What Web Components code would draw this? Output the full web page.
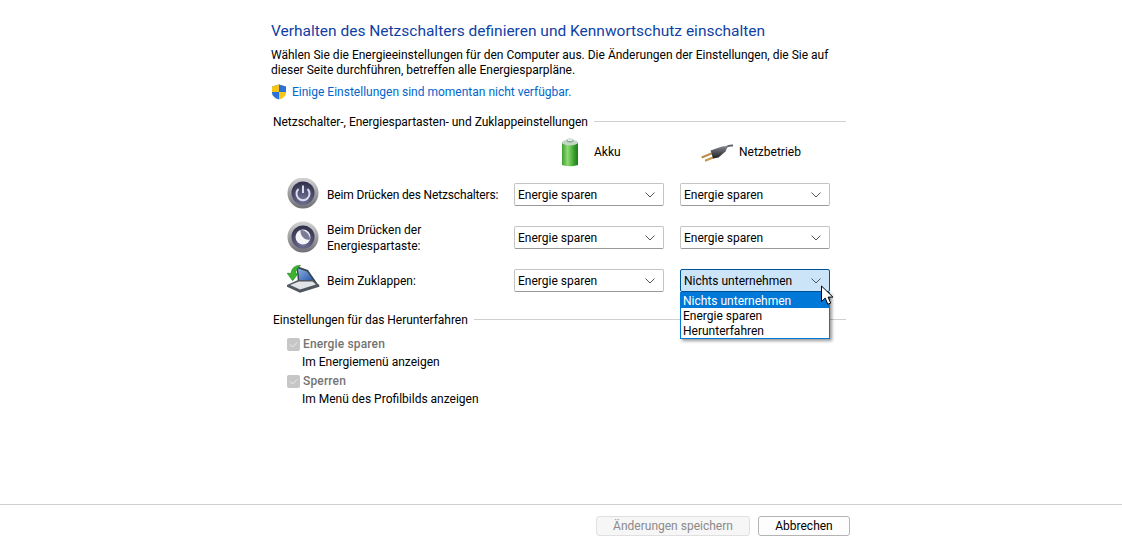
<!DOCTYPE html>
<html lang="de">
<head>
<meta charset="utf-8">
<title>Systemeinstellungen</title>
<style>
    html, body { margin: 0; height: 100%; background: #fff; }
    body { font: 12px Roboto, "Liberation Sans", sans-serif; color: #000; }
</style>
</head>
<body>
<power-page>
    <h-line slot="g1" label="Netzschalter-, Energiespartasten- und Zuklappeinstellungen"></h-line>
    <power-row slot="rows" icon="power"><span style="letter-spacing:-.16px">Beim Drücken des Netzschalters:</span><combo-box slot="a" value="Energie sparen"></combo-box><combo-box slot="b" value="Energie sparen"></combo-box></power-row>
    <power-row slot="rows" icon="sleep">Beim Drücken der<br>Energiespartaste:<combo-box slot="a" value="Energie sparen"></combo-box><combo-box slot="b" value="Energie sparen"></combo-box></power-row>
    <power-row slot="rows" icon="lid">Beim Zuklappen:<combo-box slot="a" value="Energie sparen"></combo-box><combo-box slot="b" value="Nichts unternehmen" open></combo-box></power-row>
    <h-line slot="g2" label="Einstellungen für das Herunterfahren"></h-line>
    <check-item slot="checks" label="Energie sparen" hint="Im Energiemenü anzeigen"></check-item>
    <check-item slot="checks" label="Sperren" hint="Im Menü des Profilbilds anzeigen"></check-item>
    <action-button slot="footer" disabled>Änderungen speichern</action-button>
    <action-button slot="footer">Abbrechen</action-button>
</power-page>

<script>
const FONT = `Roboto, "Liberation Sans", sans-serif`

const DISC = `
    <defs>
        <linearGradient id="r" x1="0" y1="0" x2="0" y2="1"><stop offset="0" stop-color="#d4d4d6"/><stop offset="1" stop-color="#6f6f74"/></linearGradient>
        <radialGradient id="f" cx=".5" cy=".8" r=".8"><stop offset="0" stop-color="#73739c"/><stop offset="1" stop-color="#2e2e48"/></radialGradient>
    </defs>
    <circle cx="16" cy="16" r="15.500" fill="url(#r)"/><circle cx="16" cy="16" r="11.500" fill="url(#f)"/>`

const ICONS = {
    power: `<svg width="32" height="32" viewBox="0 1 32 32">${DISC}
        <path d="M11.500 12a6.500 6.500 0 1 0 9 0" fill="none" stroke="#dcdcea" stroke-width="2"/>
        <path d="M16 8.500v7.500" stroke="#dcdcea" stroke-width="2"/>
    </svg>`,
    sleep: `<svg width="32" height="32" viewBox="0 0 32 32">${DISC}
        <circle cx="16" cy="16" r="7.500" fill="#f4f4f9"/>
        <path d="M13.500 9C18 8.500 23 13 23 18.500 18 20 13 15 13.500 9z" fill="#7b7b96"/>
    </svg>`,
    lid: `<svg width="33" height="30" viewBox="0 0 33 30">
        <defs><linearGradient id="s" x1="0" y1="0" x2="1" y2="1"><stop offset="0" stop-color="#8ab2e4"/><stop offset="1" stop-color="#1f4f9e"/></linearGradient></defs>
        <path d="M9.500 2L21 6l9 13H11z" fill="#39424f"/>
        <path d="M11 4.500L20 7.500l7.500 10.500H12.500z" fill="url(#s)"/>
        <path d="M0 21l11-5h15.300l6 5v1.700L13 28.700 0 22.700z" fill="#50575f"/>
        <path d="M3 21l9-3.500h13.500L29 20.500 13 25.500z" fill="#e2e4e7"/>
        <path d="M13.500 1.500C8.500 1 4.500 4 4.200 9.300H.200l5.500 7.400 5.600-7.400H8.400C8.800 6.500 10.800 3.500 13.500 1.500z" fill="#3bb32e" stroke="#1d7d1a" stroke-width=".6"/>
    </svg>`,
    battery: `<svg width="24" height="32" viewBox="0 0 24 32">
        <defs><linearGradient id="b" x1="0" y1="0" x2="1" y2="0"><stop offset="0" stop-color="#3f9e32"/><stop offset=".35" stop-color="#8fdb72"/><stop offset=".75" stop-color="#3aa02c"/><stop offset="1" stop-color="#1c7a1d"/></linearGradient></defs>
        <path d="M3 6.500h16v22.500q-8 2.500-16 0z" fill="url(#b)"/>
        <ellipse cx="11" cy="6.500" rx="8" ry="3" fill="#c3d8c4"/>
        <ellipse cx="11" cy="4.500" rx="3.500" ry="2" fill="#8ea79c"/>
        <ellipse cx="11" cy="3.900" rx="2.800" ry="1.200" fill="#e1ebe6"/>
    </svg>`,
    plug: `<svg width="36" height="22" viewBox="0 0 36 22">
        <defs><linearGradient id="p" x1="0" y1="0" x2="0" y2="1"><stop offset="0" stop-color="#82868c"/><stop offset="1" stop-color="#1d2024"/></linearGradient></defs>
        <path d="M26 6q3-1.800 7-1.500" fill="none" stroke="#5d6066" stroke-width="2"/>
        <path d="M1.700 16.500L11.700 12.300" stroke="#b98a45" stroke-width="2"/>
        <path d="M5 19.700L15 15.700" stroke="#c39a52" stroke-width="2"/>
        <path d="M10.500 9.500L22 5.500l6-.500-2.500 5.500-7 6-5.500 1z" fill="url(#p)"/>
    </svg>`
}

class HLine extends HTMLElement {
    constructor() {
        super()
        this.attachShadow({ mode: 'open' })
        this.shadowRoot.innerHTML = `
            <style>
                :host { display: flex; align-items: center; gap: 6px; padding-left: 2px; height: 16px; }
                span { white-space: nowrap; letter-spacing: -.03px; padding-top: 2px; }
                i { flex: 1; height: 1px; background: #d0d0d0; }
            </style>
            <span>${this.getAttribute('label')}</span><i></i>
        `
    }
}

class ComboBox extends HTMLElement {
    constructor() {
        super()
        this.attachShadow({ mode: 'open' })
        const open = this.hasAttribute('open')
        const items = ['Nichts unternehmen', 'Energie sparen', 'Herunterfahren']
        this.shadowRoot.innerHTML = `
            <style>
                :host { display: block; position: relative; width: 150px; height: 23px; }
                .box {
                    box-sizing: border-box; height: 23px; display: flex; align-items: center; justify-content: space-between;
                    padding: 0 8px 0 3px; background: #fff; border: 1px solid #c4c4c4; border-bottom-color: #999; border-radius: 2px;
                }
                :host([open]) .box { background: #cce4f7; border-color: #005499; }
                .list {
                    position: absolute; left: 0; top: 23px; width: 150px; box-sizing: border-box; z-index: 2;
                    background: #fff; border: 1px solid #0078d7; box-shadow: 2px 2px 3px rgba(0,0,0,.4);
                }
                .list div { height: 15px; line-height: 16px; padding-left: 2px; }
                .list div:first-child { background: #0078d7; color: #fff; }
                svg { display: block; }
            </style>
            <div class="box"><span>${this.getAttribute('value')}</span>
                <svg width="10" height="6" viewBox="0 0 10 6"><path d="M.5.500L5 5 9.500.500" fill="none" stroke="#555"/></svg>
            </div>
            ${open ? `<div class="list">${items.map(i => `<div>${i}</div>`).join('')}</div>
            <svg style="position:absolute;left:140px;top:16px;z-index:3" width="14" height="21" viewBox="0 0 14 21"><path d="M1.500 1v15.500l3.700-3.400 2.600 6.200 2.900-1.200-2.600-6h4.800z" fill="#fff" stroke="#000"/></svg>` : ''}
        `
    }
}

class PowerRow extends HTMLElement {
    constructor() {
        super()
        this.attachShadow({ mode: 'open' })
        this.shadowRoot.innerHTML = `
            <style>
                :host { display: grid; grid-template-columns: 32px 195px 150px 166px; align-items: center; height: 33px; }
                .icon { align-self: start; }
                .label { padding-left: 8px; line-height: 16px; white-space: nowrap; }
                .b { margin-left: 16px; }
                svg { display: block; }
            </style>
            <div class="icon">${ICONS[this.getAttribute('icon')]}</div>
            <div class="label"><slot></slot></div>
            <div class="a"><slot name="a"></slot></div>
            <div class="b"><slot name="b"></slot></div>
        `
    }
}

class CheckItem extends HTMLElement {
    constructor() {
        super()
        this.attachShadow({ mode: 'open' })
        this.shadowRoot.innerHTML = `
            <style>
                :host { display: grid; grid-template-columns: 16px auto; grid-template-rows: 16px 16px; line-height: 16px; padding-left: 16px; height: 37px; }
                .box { width: 13px; height: 13px; margin-top: 2px; border-radius: 2px; background: #c6c6c6; display: block; }
                b { font-weight: 500; color: #747474; letter-spacing: .15px; }
                .hint { grid-column: 2; margin: 2px 0 0 -1px; }
            </style>
            <svg class="box" viewBox="0 0 13 13"><path d="M3 6.500l2.500 2.500L10 4.500" fill="none" stroke="#eee" stroke-width="1"/></svg>
            <b>${this.getAttribute('label')}</b>
            <span class="hint">${this.getAttribute('hint')}</span>
        `
    }
}

class ActionButton extends HTMLElement {
    constructor() {
        super()
        this.attachShadow({ mode: 'open' })
        this.shadowRoot.innerHTML = `
            <style>
                :host { display: flex; align-items: center; justify-content: center; box-sizing: border-box; height: 20px; width: 92px;
                    background: #fdfdfd; border: 1px solid #b4b4b4; border-radius: 3px; }
                :host([disabled]) { width: 154px; color: #8a8a8a; background: #f6f6f6; border-color: #e0e0e0; }
            </style>
            <slot></slot>
        `
    }
}

class PowerPage extends HTMLElement {
    constructor() {
        super()
        this.attachShadow({ mode: 'open' })
        this.shadowRoot.innerHTML = `
            <style>
                :host { display: flex; flex-direction: column; height: 547px; overflow: hidden; font-family: ${FONT}; font-size: 12px; }
                main { flex: 1; box-sizing: border-box; width: 575px; margin-left: 271px; padding-top: 21px; }
                h1 { margin: 0; font-size: 15.5px; line-height: 20px; font-weight: 400; color: #0f3fa6; white-space: nowrap; }
                p { margin: 7px 0 0; line-height: 15px; white-space: nowrap; }
                .note { display: flex; align-items: center; gap: 5px; margin-top: 5px; height: 18px; color: #0066cc; }
                .g1 { margin-top: 12px; }
                .heads { display: flex; height: 32px; margin-top: 7px; }
                .head { display: flex; align-items: center; }
                .rows { display: flex; flex-direction: column; gap: 10px; margin: 10px 0 0 16px; }
                .g2 { margin-top: 14px; }
                .checks { margin-top: 9px; }
                svg { display: block; }
                footer { box-sizing: border-box; height: 43px; border-top: 1px solid #cfcfcf; display: flex; justify-content: flex-end; align-items: flex-start; gap: 8px; padding: 11px 272px 0 0; }
            </style>
            <main>
                <h1>Verhalten des Netzschalters definieren und Kennwortschutz einschalten</h1>
                <p>Wählen Sie die Energieeinstellungen für den Computer aus. Die Änderungen der Einstellungen, die Sie auf<br>dieser Seite durchführen, betreffen alle Energiesparpläne.</p>
                <div class="note">
                    <svg width="16" height="16" viewBox="0 0 16 16">
                        <path d="M8 .500L1 2.500v6c0 3.500 3 5.800 7 7z" fill="#2a72d8"/>
                        <path d="M8 .500l7 2v6c0 3.500-3 5.800-7 7z" fill="#f5c518"/>
                        <path d="M1 2.500l7-2v7.500H1z" fill="#f5c518"/>
                        <path d="M8 .500l7 2v5.500H8z" fill="#2a72d8"/>
                    </svg>
                    Einige Einstellungen sind momentan nicht verfügbar.
                </div>
                <div class="g1"><slot name="g1"></slot></div>
                <div class="heads">
                    <div class="head" style="margin-left:288px;width:141px;gap:11px">${ICONS.battery}<span>Akku</span></div>
                    <div class="head" style="gap:3px">${ICONS.plug}<span>Netzbetrieb</span></div>
                </div>
                <div class="rows"><slot name="rows"></slot></div>
                <div class="g2"><slot name="g2"></slot></div>
                <div class="checks"><slot name="checks"></slot></div>
            </main>
            <footer><slot name="footer"></slot></footer>
        `
    }
}

customElements.define('h-line', HLine)
customElements.define('combo-box', ComboBox)
customElements.define('power-row', PowerRow)
customElements.define('check-item', CheckItem)
customElements.define('action-button', ActionButton)
customElements.define('power-page', PowerPage)
</script>
</body>
</html>
